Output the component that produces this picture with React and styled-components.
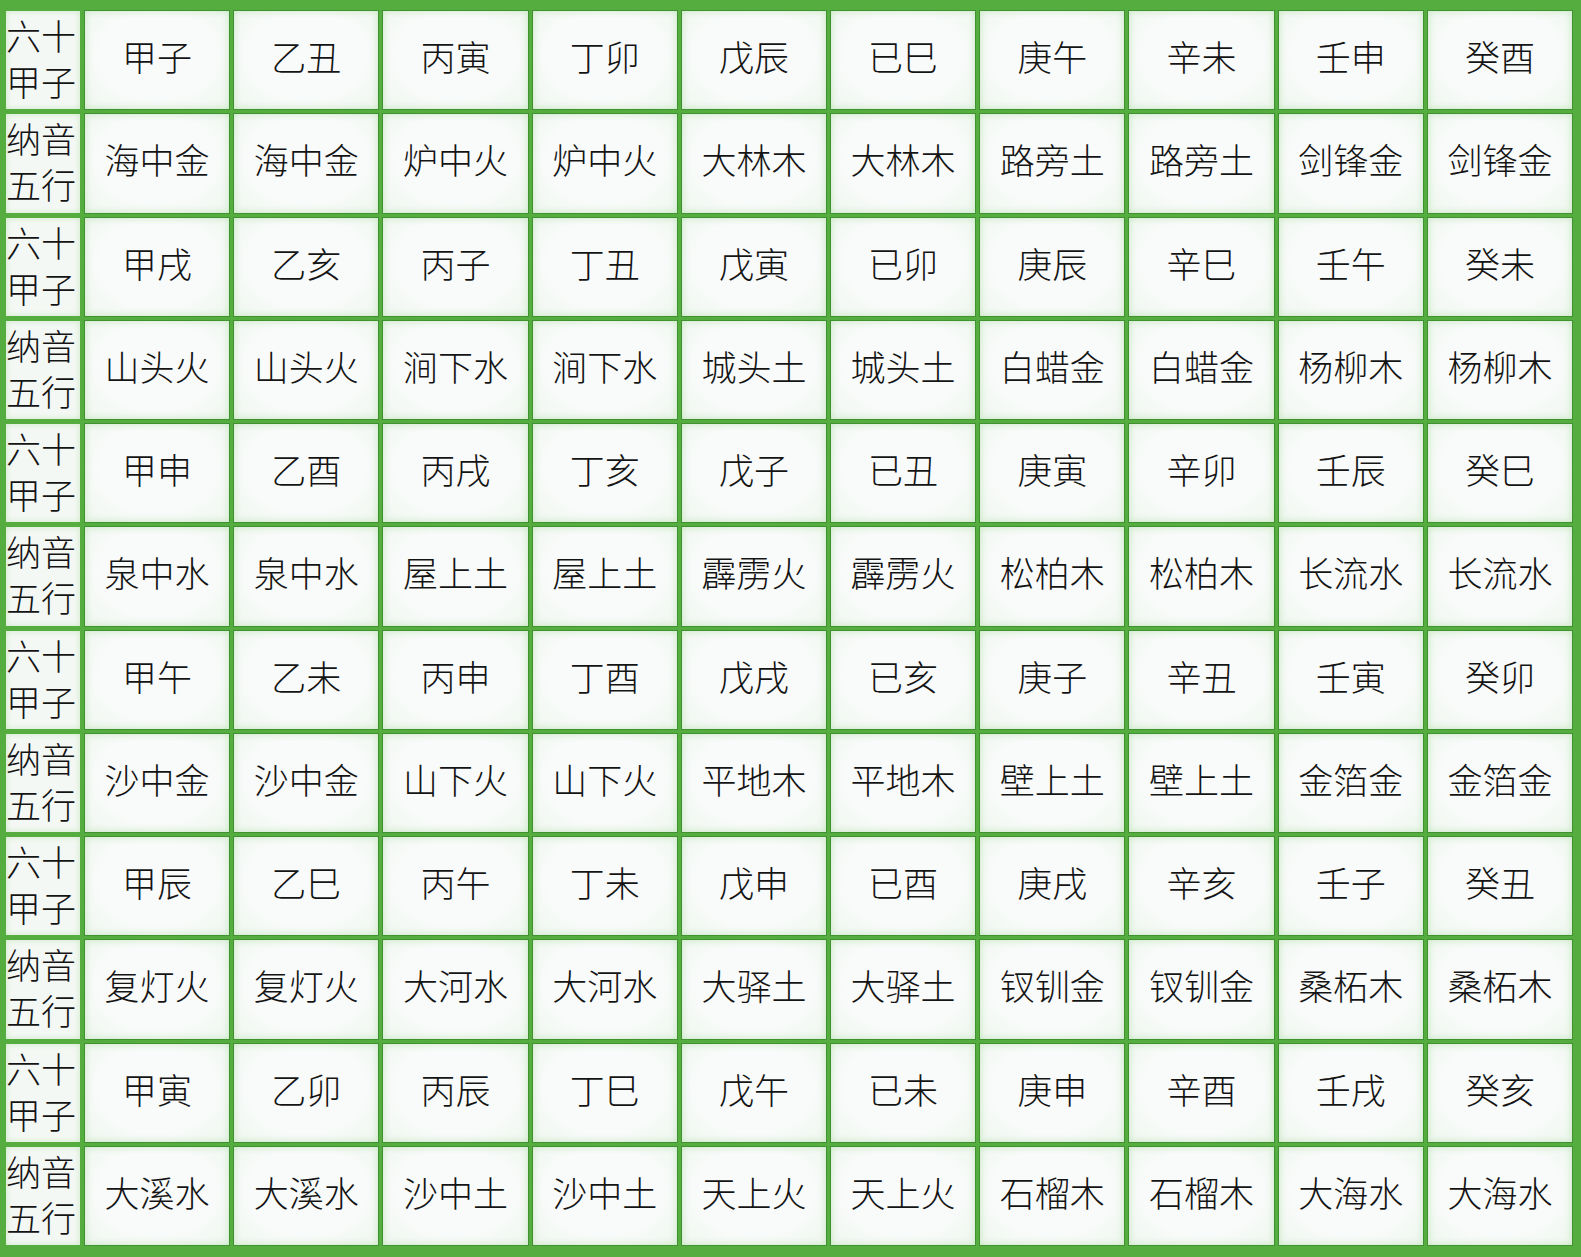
import React from 'react';
import styled, { createGlobalStyle } from 'styled-components';

const ROWS = [
  {
    ganzhi: ['甲子', '乙丑', '丙寅', '丁卯', '戊辰', '已巳', '庚午', '辛未', '壬申', '癸酉'],
    nayin: ['海中金', '海中金', '炉中火', '炉中火', '大林木', '大林木', '路旁土', '路旁土', '剑锋金', '剑锋金'],
  },
  {
    ganzhi: ['甲戌', '乙亥', '丙子', '丁丑', '戊寅', '已卯', '庚辰', '辛巳', '壬午', '癸未'],
    nayin: ['山头火', '山头火', '涧下水', '涧下水', '城头土', '城头土', '白蜡金', '白蜡金', '杨柳木', '杨柳木'],
  },
  {
    ganzhi: ['甲申', '乙酉', '丙戌', '丁亥', '戊子', '已丑', '庚寅', '辛卯', '壬辰', '癸巳'],
    nayin: ['泉中水', '泉中水', '屋上土', '屋上土', '霹雳火', '霹雳火', '松柏木', '松柏木', '长流水', '长流水'],
  },
  {
    ganzhi: ['甲午', '乙未', '丙申', '丁酉', '戊戌', '已亥', '庚子', '辛丑', '壬寅', '癸卯'],
    nayin: ['沙中金', '沙中金', '山下火', '山下火', '平地木', '平地木', '壁上土', '壁上土', '金箔金', '金箔金'],
  },
  {
    ganzhi: ['甲辰', '乙巳', '丙午', '丁未', '戊申', '已酉', '庚戌', '辛亥', '壬子', '癸丑'],
    nayin: ['复灯火', '复灯火', '大河水', '大河水', '大驿土', '大驿土', '钗钏金', '钗钏金', '桑柘木', '桑柘木'],
  },
  {
    ganzhi: ['甲寅', '乙卯', '丙辰', '丁巳', '戊午', '已未', '庚申', '辛酉', '壬戌', '癸亥'],
    nayin: ['大溪水', '大溪水', '沙中土', '沙中土', '天上火', '天上火', '石榴木', '石榴木', '大海水', '大海水'],
  },
];

const GlobalStyle = createGlobalStyle`
  html, body {
    margin: 0;
    padding: 0;
    background: #55ad40;
  }
  body {
    font-family: "Noto Sans CJK SC", "Noto Sans", sans-serif;
  }
`;

function App() {
  return (
    <>
      <GlobalStyle />
      <Board>
        {ROWS.map((row, i) => (
          <React.Fragment key={i}>
            <Label>
              <LabelLine>六十</LabelLine>
              <LabelLine>甲子</LabelLine>
            </Label>
            {row.ganzhi.map((name, j) => (
              <Cell key={'g' + j}>{name}</Cell>
            ))}
            <Label>
              <LabelLine>纳音</LabelLine>
              <LabelLine>五行</LabelLine>
            </Label>
            {row.nayin.map((name, j) => (
              <Cell key={'n' + j}>{name}</Cell>
            ))}
          </React.Fragment>
        ))}
      </Board>
    </>
  );
}

const Board = styled.div`
  width: 1581px;
  height: 1257px;
  box-sizing: border-box;
  padding: 11px 9px 12px 6px;
  display: grid;
  grid-template-columns: 74px repeat(10, 1fr);
  grid-template-rows: repeat(12, 1fr);
  gap: 5px;
  background: #55ad40;
`;

const Cell = styled.div`
  display: flex;
  align-items: center;
  justify-content: center;
  box-sizing: border-box;
  padding-bottom: 9px;
  background: radial-gradient(ellipse at 50% 45%, #f9fbfa 55%, #eef6ee 100%);
  box-shadow: inset 0 0 7px rgba(140, 210, 125, 0.45);
  outline: 1px solid #3f922f;
  color: #141414;
  font-size: 35px;
  font-weight: 300;
  line-height: 1;
`;

const Label = styled.div`
  display: flex;
  flex-direction: column;
  justify-content: center;
  box-sizing: border-box;
  padding-bottom: 4px;
  background: #f4f8f4;
  box-shadow: inset 0 0 6px rgba(140, 210, 125, 0.4);
  color: #141414;
`;

const LabelLine = styled.span`
  display: block;
  font-size: 35px;
  font-weight: 300;
  line-height: 46px;
  height: 46px;
  white-space: nowrap;
`;

export default App;
